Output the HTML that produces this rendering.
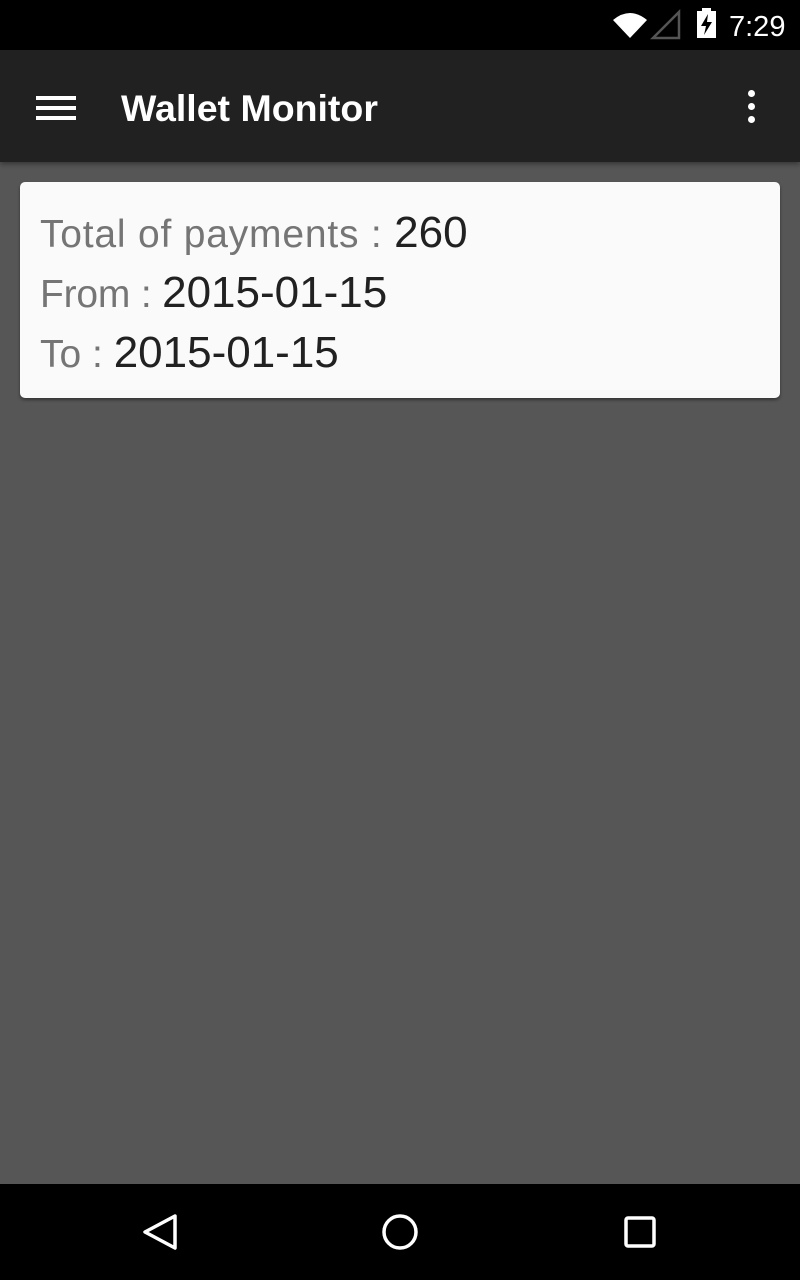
<!DOCTYPE html>
<html><head><style>
*{margin:0;padding:0}
body{width:800px;height:1280px;background:#565656;position:relative;overflow:hidden;font-family:"Liberation Sans",sans-serif}
.sb{position:absolute;top:0;left:0;width:800px;height:50px;background:#000}
.ab{position:absolute;top:50px;left:0;width:800px;height:112px;background:#212121;box-shadow:0 2px 5px rgba(0,0,0,.4)}
.title{position:absolute;left:121px;top:86px;color:#fff;font-size:37.5px;font-weight:bold;line-height:44px}
.card{position:absolute;left:20px;top:182px;width:760px;height:216px;background:#fafafa;border-radius:5px;box-shadow:0 2px 3px rgba(0,0,0,.4)}
.l{position:absolute;left:20px;white-space:nowrap;color:#757575;font-size:39px;letter-spacing:.8px}
.l span{color:#212121;font-size:44px;letter-spacing:0}
.nb{position:absolute;top:1184px;left:0;width:800px;height:96px;background:#000}
</style></head><body>
<div class="sb">
<svg width="800" height="50" style="position:absolute;left:0;top:0">
<path d="M613 20 Q630 6 647 20 L630 38 Z" fill="#fff"/>
<path d="M653 38 L679 12 L679 38 Z" fill="none" stroke="#555" stroke-width="2.5"/>
<rect x="697" y="11" width="19" height="27" fill="#fff"/><rect x="702" y="8" width="9" height="4" fill="#fff"/>
<path d="M708 14 L701 26 L706 26 L704 35 L712 22 L707 22 Z" fill="#000"/>
<text x="729" y="36" fill="#fff" font-size="29" font-family="Liberation Sans">7:29</text>
</svg></div>
<div class="ab">
<div style="position:absolute;left:36px;top:46px;width:40px;height:4px;background:#fff"></div>
<div style="position:absolute;left:36px;top:56px;width:40px;height:4px;background:#fff"></div>
<div style="position:absolute;left:36px;top:66px;width:40px;height:4px;background:#fff"></div>
<div style="position:absolute;left:748px;top:40px;width:7px;height:7px;border-radius:50%;background:#fff"></div>
<div style="position:absolute;left:748px;top:53px;width:7px;height:7px;border-radius:50%;background:#fff"></div>
<div style="position:absolute;left:748px;top:66px;width:7px;height:7px;border-radius:50%;background:#fff"></div>
</div>
<div class="title">Wallet Monitor</div>
<div class="card">
<div class="l" style="top:26px">Total of payments : <span>260</span></div>
<div class="l" style="top:86px;letter-spacing:-.2px">From : <span>2015-01-15</span></div>
<div class="l" style="top:146px;letter-spacing:0">To : <span>2015-01-15</span></div>
</div>
<div class="nb">
<svg width="800" height="96" style="position:absolute;left:0;top:0">
<path d="M175 32 L145 48 L175 64 Z" fill="none" stroke="#fff" stroke-width="3.5" stroke-linejoin="round"/>
<circle cx="400" cy="48" r="16" fill="none" stroke="#fff" stroke-width="3.5"/>
<rect x="626" y="34" width="28" height="28" rx="2" fill="none" stroke="#fff" stroke-width="3.5"/>
</svg></div>
</body></html>
